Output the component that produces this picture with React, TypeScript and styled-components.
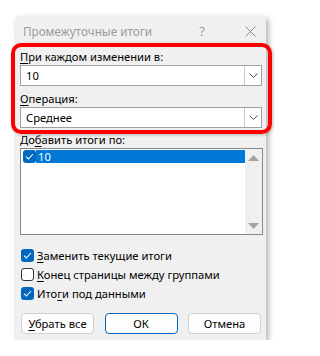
import React from "react";
import styled, { createGlobalStyle } from "styled-components";

const GlobalStyle = createGlobalStyle`
  html, body {
    margin: 0;
    padding: 0;
    background: #ffffff;
  }
  body {
    font-family: "Noto Sans", "Segoe UI", sans-serif;
    font-size: 11.2px;
    color: #000;
  }
`;

const Page = styled.div`
  padding: 16px 0 0 16px;
`;

const Dialog = styled.div`
  position: relative;
  width: 250px;
  background: #f0f0f0;
  box-shadow: 2px 3px 6px rgba(0, 0, 0, 0.35);
  padding-bottom: 6px;
`;

const TitleBar = styled.div`
  display: flex;
  align-items: center;
  height: 30px;
  padding: 0 0 3px 7px;
  color: #9a9a9a;
`;

const Title = styled.div`
  flex: 1;
  font-size: 11.7px;
`;

const Help = styled.div`
  width: 20px;
  text-align: center;
  font-size: 13px;
  margin-right: 28px;
`;

const Close = styled.div`
  width: 20px;
  display: flex;
  justify-content: center;
  margin-right: 6px;
`;

const Body = styled.div`
  padding: 0 4px;
`;

const Label = styled.div<{ $top?: number }>`
  line-height: 16px;
  padding-top: ${(p) => p.$top ?? 0}px;
  white-space: nowrap;
`;

const Key = styled.span`
  text-decoration: underline;
  text-underline-offset: 2px;
`;

const Combo = styled.div`
  display: flex;
  height: 21px;
  box-sizing: border-box;
  border: 1px solid #a0a0a0;
  background: #fff;
`;

const ComboText = styled.div`
  flex: 1;
  padding-left: 5px;
  line-height: 19px;
`;

const ComboButton = styled.div`
  width: 16px;
  border-left: 1px solid #c8c8c8;
  display: flex;
  align-items: center;
  justify-content: center;
`;

const ListBox = styled.div`
  display: flex;
  height: 87px;
  width: 243px;
  box-sizing: border-box;
  border: 1px solid #828790;
  background: #fff;
`;

const ListItems = styled.div`
  flex: 1;
  padding: 1px 0 0 2px;
`;

const ListRow = styled.div`
  display: flex;
  align-items: center;
  height: 13px;
`;

const RowText = styled.div<{ $selected?: boolean }>`
  flex: 1;
  height: 13px;
  line-height: 13px;
  padding-left: 2px;
  background: ${(p) => (p.$selected ? "#0078d7" : "transparent")};
  color: ${(p) => (p.$selected ? "#fff" : "#000")};
`;

const ScrollBar = styled.div`
  width: 17px;
  background: #f0f0f0;
  display: flex;
  flex-direction: column;
  justify-content: space-between;
  align-items: center;
  padding: 6px 0 5px;
`;

const Box = styled.div<{ $checked?: boolean }>`
  width: 13px;
  height: 13px;
  box-sizing: border-box;
  border-radius: 3px;
  flex-shrink: 0;
  display: flex;
  align-items: center;
  justify-content: center;
  background: ${(p) => (p.$checked ? "#0067c0" : "#fff")};
  border: ${(p) => (p.$checked ? "none" : "1px solid #333")};
`;

const Options = styled.div`
  display: flex;
  flex-direction: column;
  margin-top: 11px;
`;

const Option = styled.div`
  display: flex;
  align-items: center;
  gap: 3px;
  height: 19px;
  padding-left: 1px;
  white-space: nowrap;
`;

const Buttons = styled.div`
  display: flex;
  justify-content: space-between;
  padding: 0 1px;
  margin-top: 10px;
`;

const Button = styled.div<{ $primary?: boolean }>`
  width: 73px;
  height: 21px;
  box-sizing: border-box;
  border-radius: 4px;
  background: #fdfdfd;
  border: 1px solid ${(p) => (p.$primary ? "#0067c0" : "#d0d0d0")};
  display: flex;
  align-items: center;
  justify-content: center;
`;

const Highlight = styled.div`
  position: absolute;
  left: -5px;
  top: 27px;
  width: 261px;
  height: 91px;
  box-sizing: border-box;
  border: 4px solid #ff0000;
  border-radius: 10px;
  box-shadow: 1px 1px 3px rgba(0, 0, 0, 0.25);
  pointer-events: none;
`;

const Check = () => (
  <svg width="9" height="7" viewBox="0 0 9 7">
    <path d="M1 3.6 L3.4 6 L8 1" fill="none" stroke="#fff" strokeWidth="1.1" />
  </svg>
);

const Chevron = () => (
  <svg width="9" height="5" viewBox="0 0 9 5">
    <path d="M0.5 0.5 L4.5 4.5 L8.5 0.5" fill="none" stroke="#555" strokeWidth="1" />
  </svg>
);

const Arrow = ({ down }: { down?: boolean }) => (
  <svg width="11" height="6" viewBox="0 0 11 6">
    <path d={down ? "M0 0 H11 L5.5 6 Z" : "M0 6 H11 L5.5 0 Z"} fill="#a3a3a3" />
  </svg>
);

export default function App() {
  return (
    <>
      <GlobalStyle />
      <Page>
        <Dialog>
          <TitleBar>
            <Title>Промежуточные итоги</Title>
            <Help>?</Help>
            <Close>
              <svg width="11" height="11" viewBox="0 0 11 11">
                <path d="M0.5 0.5 L10.5 10.5 M10.5 0.5 L0.5 10.5" stroke="#8a8a8a" strokeWidth="1" />
              </svg>
            </Close>
          </TitleBar>
          <Body>
            <Label>
              <Key>П</Key>ри каждом изменении в:
            </Label>
            <Combo>
              <ComboText>10</ComboText>
              <ComboButton>
                <Chevron />
              </ComboButton>
            </Combo>
            <Label $top={5}>
              <Key>О</Key>перация:
            </Label>
            <Combo>
              <ComboText>Среднее</ComboText>
              <ComboButton>
                <Chevron />
              </ComboButton>
            </Combo>
            <Label $top={4}>
              До<Key>б</Key>авить итоги по:
            </Label>
            <ListBox>
              <ListItems>
                <ListRow>
                  <Box $checked>
                    <Check />
                  </Box>
                  <RowText $selected>10</RowText>
                </ListRow>
              </ListItems>
              <ScrollBar>
                <Arrow />
                <Arrow down />
              </ScrollBar>
            </ListBox>
            <Options>
              <Option>
                <Box $checked>
                  <Check />
                </Box>
                <span>
                  <Key>З</Key>аменить текущие итоги
                </span>
              </Option>
              <Option>
                <Box />
                <span>
                  <Key>К</Key>онец страницы между группами
                </span>
              </Option>
              <Option>
                <Box $checked>
                  <Check />
                </Box>
                <span>
                  Ито<Key>г</Key>и под данными
                </span>
              </Option>
            </Options>
            <Buttons>
              <Button>
                <span>
                  <Key>У</Key>брать все
                </span>
              </Button>
              <Button $primary>ОК</Button>
              <Button>Отмена</Button>
            </Buttons>
          </Body>
          <Highlight />
        </Dialog>
      </Page>
    </>
  );
}
